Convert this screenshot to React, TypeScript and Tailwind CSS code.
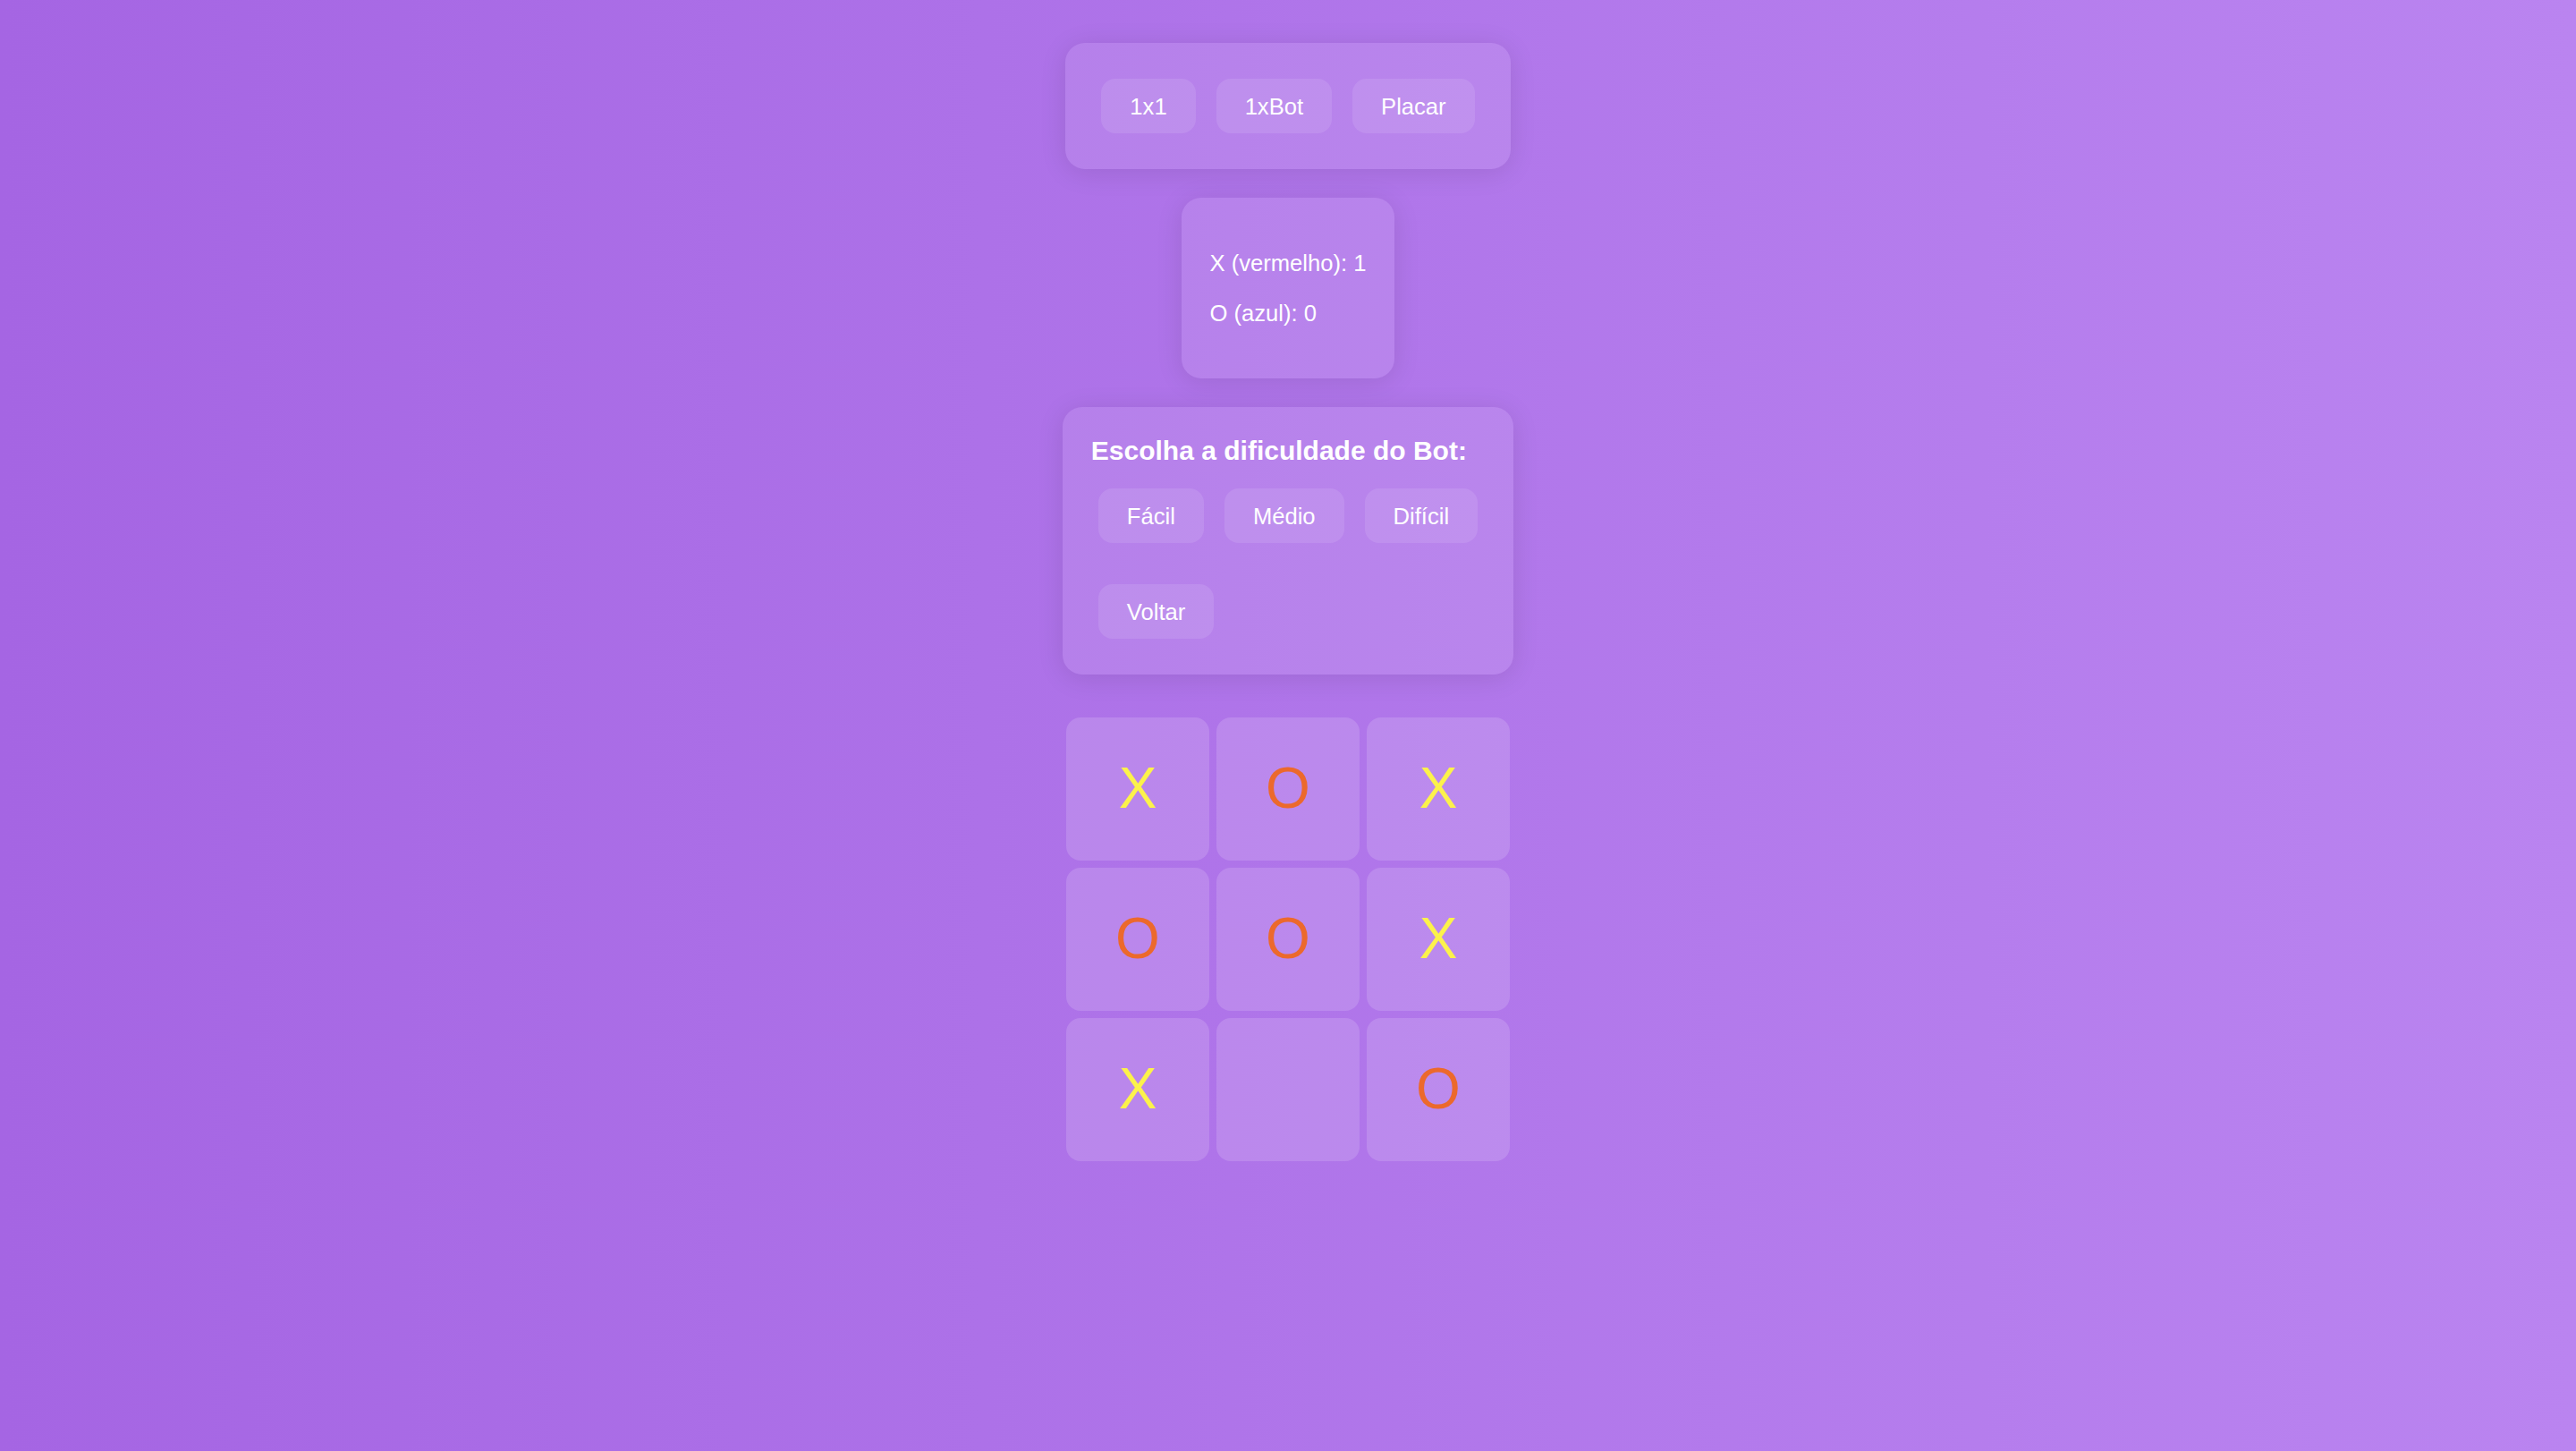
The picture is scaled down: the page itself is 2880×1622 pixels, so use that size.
import React from 'react';

type Mark = 'X' | 'O' | '';

const board: Mark[] = ['X', 'O', 'X', 'O', 'O', 'X', 'X', '', 'O'];

const markClasses: Record<string, string> = {
  X: 'text-[#fcf24b]',
  O: 'text-[#ec692c]',
  '': '',
};

const cardClass =
  'rounded-[22px] bg-white/10 shadow-[0_4px_30px_rgba(0,0,0,0.1)]';

const Btn: React.FC<{ label: string }> = ({ label }) => (
  <button className="h-[61px] px-[32px] rounded-[16px] bg-white/10 text-[25.6px] leading-[30px] text-white whitespace-nowrap">
    {label}
  </button>
);

const App: React.FC = () => {
  return (
    <div className="min-h-screen w-full bg-linear-to-r from-[#a565e3] to-[#ba84f0] flex flex-col items-center pt-[48px] pb-[60px] font-['Liberation_Sans',Arial,sans-serif] text-white">
      {/* modos */}
      <div className={`${cardClass} flex gap-[23px] p-[40px]`}>
        <Btn label="1x1" />
        <Btn label="1xBot" />
        <Btn label="Placar" />
      </div>

      {/* placar */}
      <div className={`${cardClass} mt-[32px] flex flex-col gap-[26px] px-[32px] py-[58px] text-[25.6px] leading-[30px]`}>
        <p>X (vermelho): 1</p>
        <p>O (azul): 0</p>
      </div>

      {/* dificuldade */}
      <div className={`${cardClass} mt-[32px] pt-[32px] px-[32px] pb-[40px]`}>
        <h3 className="text-[30px] leading-[34px] font-bold">Escolha a dificuldade do Bot:</h3>
        <div className="mt-[25px] px-[8px] flex gap-[23px]">
          <Btn label="Fácil" />
          <Btn label="Médio" />
          <Btn label="Difícil" />
        </div>
        <div className="mt-[46px] px-[8px] flex">
          <Btn label="Voltar" />
        </div>
      </div>

      {/* tabuleiro */}
      <div className="mt-[48px] grid grid-cols-3 gap-[8px]">
        {board.map((m, i) => (
          <div
            key={i}
            className={`size-[160px] rounded-[16px] bg-white/15 flex items-center justify-center pb-[3px] text-[64px] leading-none ${markClasses[m]}`}
          >
            {m}
          </div>
        ))}
      </div>
    </div>
  );
};

export default App;
